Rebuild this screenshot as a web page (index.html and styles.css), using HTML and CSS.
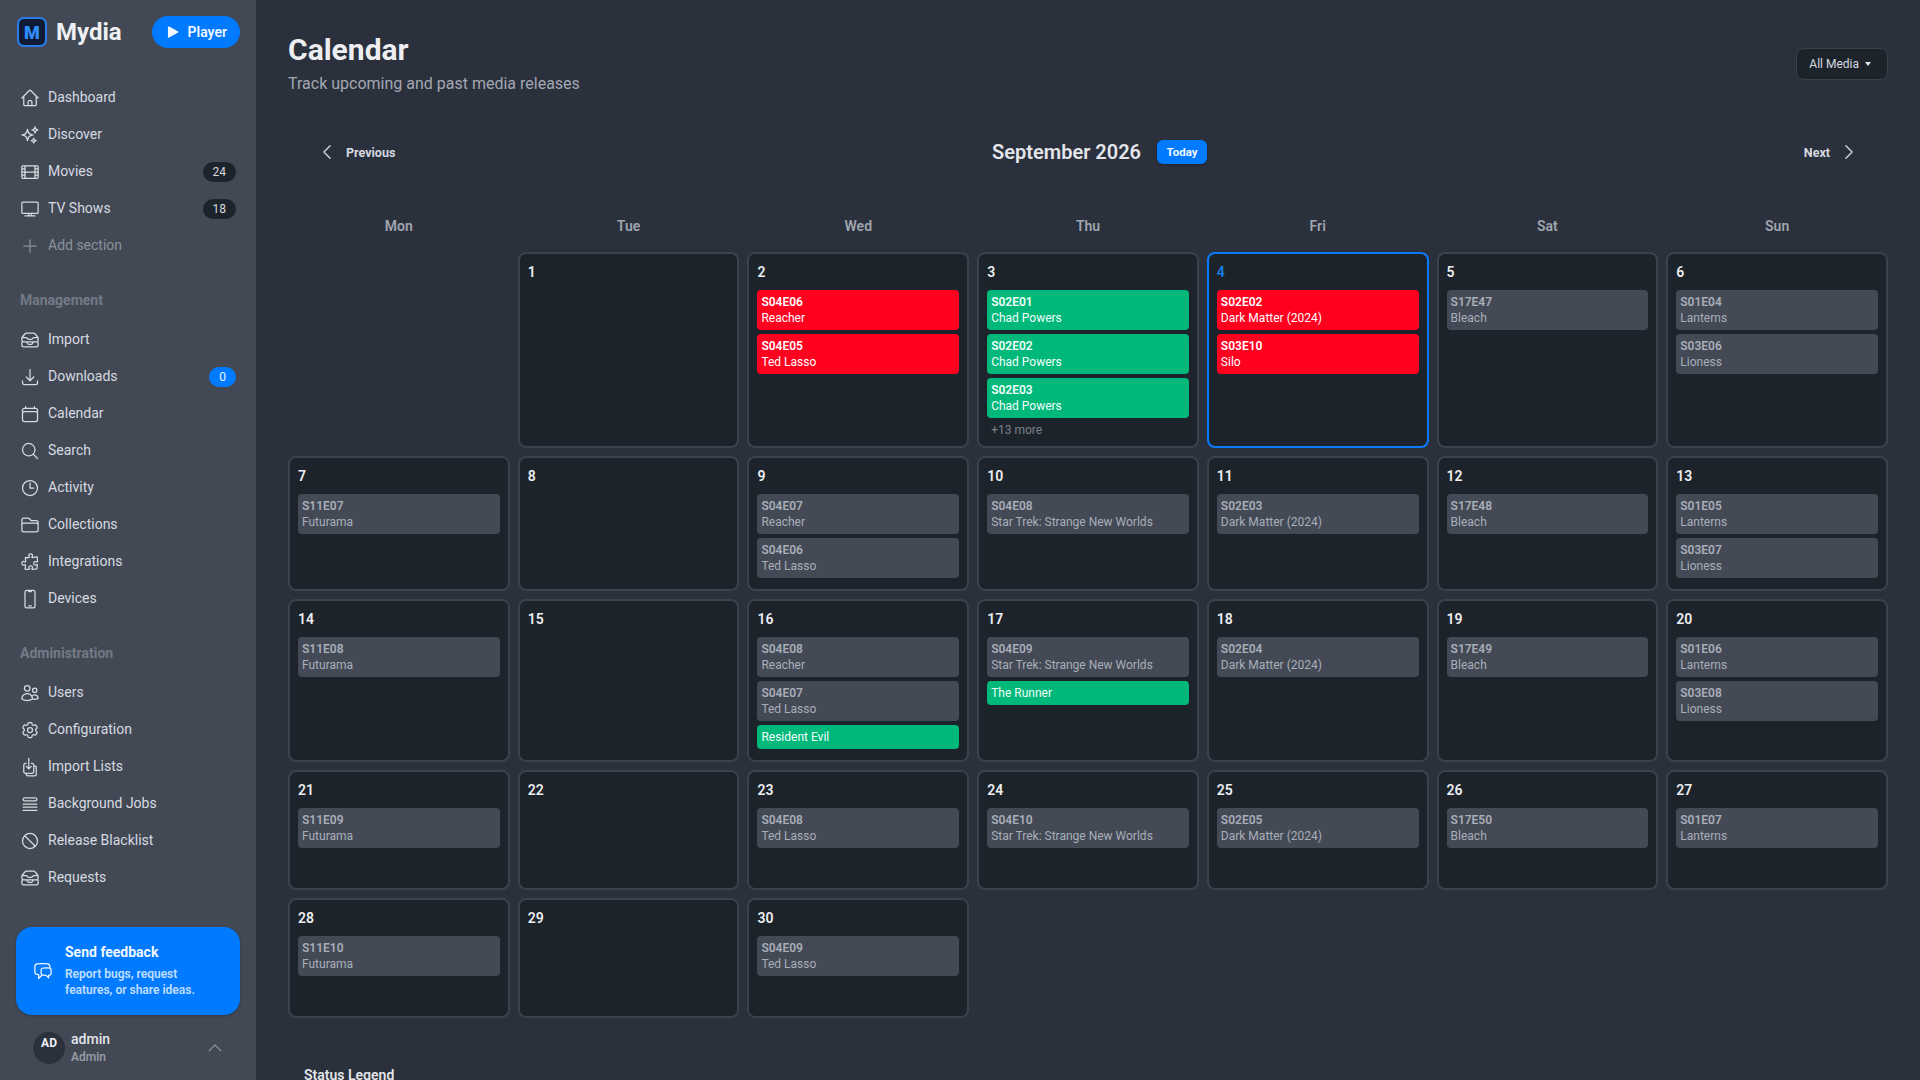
FILE: index.html
```html
<!DOCTYPE html>
<html lang="en">
<head>
  <meta charset="UTF-8">
  <meta name="viewport" content="width=device-width, initial-scale=1.0">
  <title>Calendar - Mydia</title>
  <link rel="stylesheet" href="styles.css">
</head>
<body>
  <!-- icon sprite -->
  <svg class="sprite" xmlns="http://www.w3.org/2000/svg">
    <symbol id="i-home" viewBox="0 0 24 24"><path d="m2.25 12 8.954-8.955c.44-.439 1.152-.439 1.591 0L21.75 12M4.5 9.75v10.125c0 .621.504 1.125 1.125 1.125H9.75v-4.875c0-.621.504-1.125 1.125-1.125h2.25c.621 0 1.125.504 1.125 1.125V21h4.125c.621 0 1.125-.504 1.125-1.125V9.75M8.25 21h8.25"/></symbol>
    <symbol id="i-sparkles" viewBox="0 0 24 24"><path d="M9.813 15.904 9 18.75l-.813-2.846a4.5 4.5 0 0 0-3.09-3.09L2.25 12l2.846-.813a4.5 4.5 0 0 0 3.09-3.09L9 5.25l.813 2.846a4.5 4.5 0 0 0 3.09 3.09L15.75 12l-2.846.813a4.5 4.5 0 0 0-3.09 3.09ZM18.259 8.715 18 9.75l-.259-1.035a3.375 3.375 0 0 0-2.455-2.456L14.25 6l1.036-.259a3.375 3.375 0 0 0 2.455-2.456L18 2.25l.259 1.035a3.375 3.375 0 0 0 2.456 2.456L21.75 6l-1.035.259a3.375 3.375 0 0 0-2.456 2.456ZM16.894 20.567 16.5 21.75l-.394-1.183a2.25 2.25 0 0 0-1.423-1.423L13.5 18.75l1.183-.394a2.25 2.25 0 0 0 1.423-1.423l.394-1.183.394 1.183a2.25 2.25 0 0 0 1.423 1.423l1.183.394-1.183.394a2.25 2.25 0 0 0-1.423 1.423Z"/></symbol>
    <symbol id="i-film" viewBox="0 0 24 24"><path d="M3.375 19.5h17.25m-17.25 0a1.125 1.125 0 0 1-1.125-1.125M3.375 19.5h1.5C5.496 19.5 6 18.996 6 18.375m-3.75 0V5.625m0 12.75v-1.5c0-.621.504-1.125 1.125-1.125m18.375 2.625V5.625m0 12.75c0 .621-.504 1.125-1.125 1.125m1.125-1.125v-1.5c0-.621-.504-1.125-1.125-1.125m0 3.75h-1.5A1.125 1.125 0 0 1 18 18.375M20.625 4.5H3.375m17.25 0c.621 0 1.125.504 1.125 1.125M20.625 4.5h-1.5C18.504 4.5 18 5.004 18 5.625m3.75 0v1.5c0 .621-.504 1.125-1.125 1.125M3.375 4.5c-.621 0-1.125.504-1.125 1.125M3.375 4.5h1.5C5.496 4.5 6 5.004 6 5.625m-3.75 0v1.5c0 .621.504 1.125 1.125 1.125m0 0h1.5m-1.5 0c-.621 0-1.125.504-1.125 1.125v1.5c0 .621.504 1.125 1.125 1.125m1.5-3.75C5.496 8.25 6 7.746 6 7.125v-1.5M4.875 8.25C5.496 8.25 6 8.754 6 9.375v1.5m0-5.25v5.25m0-5.25C6 5.004 6.504 4.5 7.125 4.5h9.75c.621 0 1.125.504 1.125 1.125m1.125 2.625h1.5m-1.5 0A1.125 1.125 0 0 1 18 7.125v-1.5m1.125 2.625c-.621 0-1.125.504-1.125 1.125v1.5m2.625-2.625c.621 0 1.125.504 1.125 1.125v1.5c0 .621-.504 1.125-1.125 1.125M18 5.625v5.25M7.125 12h9.75m-9.75 0A1.125 1.125 0 0 1 6 10.875M7.125 12C6.504 12 6 12.504 6 13.125m0-2.25C6 11.496 5.496 12 4.875 12M18 10.875c0 .621-.504 1.125-1.125 1.125M18 10.875c0 .621.504 1.125 1.125 1.125m-2.25 0c.621 0 1.125.504 1.125 1.125m-12 5.25v-5.25m0 5.25c0 .621.504 1.125 1.125 1.125h9.75c.621 0 1.125-.504 1.125-1.125m-12 0v-1.5c0-.621-.504-1.125-1.125-1.125M18 18.375v-5.25m0 5.25v-1.5c0-.621.504-1.125 1.125-1.125M18 13.125v1.5c0 .621.504 1.125 1.125 1.125M18 13.125c0-.621.504-1.125 1.125-1.125M6 13.125v1.5c0 .621-.504 1.125-1.125 1.125M6 13.125C6 12.504 5.496 12 4.875 12m-1.5 0h1.5m-1.5 0c-.621 0-1.125.504-1.125 1.125v1.5c0 .621.504 1.125 1.125 1.125M19.125 12h1.5m0 0c.621 0 1.125.504 1.125 1.125v1.5c0 .621-.504 1.125-1.125 1.125m-17.25 0h1.5m14.25 0h1.5"/></symbol>
    <symbol id="i-tv" viewBox="0 0 24 24"><path d="M6 20.25h12m-7.5-3v3m3-3v3m-10.125-3h17.25c.621 0 1.125-.504 1.125-1.125V4.875c0-.621-.504-1.125-1.125-1.125H3.375c-.621 0-1.125.504-1.125 1.125v11.25c0 .621.504 1.125 1.125 1.125Z"/></symbol>
    <symbol id="i-plus" viewBox="0 0 24 24"><path d="M12 4.5v15m7.5-7.5h-15"/></symbol>
    <symbol id="i-inbox" viewBox="0 0 24 24"><path d="m7.875 14.25 1.214 1.942a2.25 2.25 0 0 0 1.908 1.058h2.006c.776 0 1.497-.4 1.908-1.058l1.214-1.942M2.41 9h4.636a2.25 2.25 0 0 1 1.872 1.002l.164.246a2.25 2.25 0 0 0 1.872 1.002h2.092a2.25 2.25 0 0 0 1.872-1.002l.164-.246A2.25 2.25 0 0 1 16.954 9h4.636M2.41 9a2.25 2.25 0 0 0-.16.832V12a2.25 2.25 0 0 0 2.25 2.25h15A2.25 2.25 0 0 0 21.75 12V9.832c0-.287-.055-.57-.16-.832M2.41 9a2.25 2.25 0 0 1 .382-.632l3.285-3.832a2.25 2.25 0 0 1 1.708-.786h8.43c.657 0 1.281.287 1.709.786l3.284 3.832c.163.19.291.404.382.632M4.5 20.25h15A2.25 2.25 0 0 0 21.75 18v-2.625c0-.621-.504-1.125-1.125-1.125H3.375c-.621 0-1.125.504-1.125 1.125V18a2.25 2.25 0 0 0 2.25 2.25Z"/></symbol>
    <symbol id="i-download" viewBox="0 0 24 24"><path d="M3 16.5v2.25A2.25 2.25 0 0 0 5.25 21h13.5A2.25 2.25 0 0 0 21 18.75V16.5M16.5 12 12 16.5m0 0L7.5 12m4.5 4.5V3"/></symbol>
    <symbol id="i-calendar" viewBox="0 0 24 24"><path d="M6.75 3v2.25M17.25 3v2.25M3 18.75V7.5a2.25 2.25 0 0 1 2.25-2.25h13.5A2.25 2.25 0 0 1 21 7.5v11.25m-18 0A2.25 2.25 0 0 0 5.25 21h13.5A2.25 2.25 0 0 0 21 18.75m-18 0v-7.5A2.25 2.25 0 0 1 5.25 9h13.5A2.25 2.25 0 0 1 21 11.25v7.5"/></symbol>
    <symbol id="i-search" viewBox="0 0 24 24"><path d="m21 21-5.197-5.197m0 0A7.5 7.5 0 1 0 5.196 5.196a7.5 7.5 0 0 0 10.607 10.607Z"/></symbol>
    <symbol id="i-clock" viewBox="0 0 24 24"><path d="M12 6v6h4.5m4.5 0a9 9 0 1 1-18 0 9 9 0 0 1 18 0Z"/></symbol>
    <symbol id="i-folder" viewBox="0 0 24 24"><path d="M2.25 12.75V12A2.25 2.25 0 0 1 4.5 9.75h15A2.25 2.25 0 0 1 21.75 12v.75m-8.69-6.44-2.12-2.12a1.5 1.5 0 0 0-1.061-.44H4.5A2.25 2.25 0 0 0 2.25 6v12a2.25 2.25 0 0 0 2.25 2.25h15A2.25 2.25 0 0 0 21.75 18V9a2.25 2.25 0 0 0-2.25-2.25h-5.379a1.5 1.5 0 0 1-1.06-.44Z"/></symbol>
    <symbol id="i-puzzle" viewBox="0 0 24 24"><path d="M14.25 6.087c0-.355.186-.676.401-.959.221-.29.349-.634.349-1.003 0-1.036-1.007-1.875-2.25-1.875s-2.25.84-2.25 1.875c0 .369.128.713.349 1.003.215.283.401.604.401.959v0a.64.64 0 0 1-.657.643 48.39 48.39 0 0 1-4.163-.3c.186 1.613.293 3.25.315 4.907a.656.656 0 0 1-.658.663v0c-.355 0-.676-.186-.959-.401a1.647 1.647 0 0 0-1.003-.349c-1.036 0-1.875 1.007-1.875 2.25s.84 2.25 1.875 2.25c.369 0 .713-.128 1.003-.349.283-.215.604-.401.959-.401v0c.31 0 .555.26.532.57a48.039 48.039 0 0 1-.642 5.056c1.518.19 3.058.309 4.616.354a.64.64 0 0 0 .657-.643v0c0-.355-.186-.676-.401-.959a1.647 1.647 0 0 1-.349-1.003c0-1.035 1.008-1.875 2.25-1.875 1.243 0 2.25.84 2.25 1.875 0 .369-.128.713-.349 1.003-.215.283-.4.604-.4.959v0c0 .333.277.599.61.58a48.1 48.1 0 0 0 5.427-.63 48.05 48.05 0 0 0 .582-4.717.532.532 0 0 0-.533-.57v0c-.355 0-.676.186-.959.401-.29.221-.634.349-1.003.349-1.035 0-1.875-1.007-1.875-2.25s.84-2.25 1.875-2.25c.37 0 .713.128 1.003.349.283.215.604.401.96.401v0a.656.656 0 0 0 .658-.663 48.422 48.422 0 0 0-.37-5.36c-1.886.342-3.81.574-5.766.689a.578.578 0 0 1-.61-.58v0Z"/></symbol>
    <symbol id="i-phone" viewBox="0 0 24 24"><path d="M10.5 1.5H8.25A2.25 2.25 0 0 0 6 3.75v16.5a2.25 2.25 0 0 0 2.25 2.25h7.5A2.25 2.25 0 0 0 18 20.25V3.75a2.25 2.25 0 0 0-2.25-2.25H13.5m-3 0V3h3V1.5m-3 0h3m-3 18.75h3"/></symbol>
    <symbol id="i-users" viewBox="0 0 24 24"><path d="M15 19.128a9.38 9.38 0 0 0 2.625.372 9.337 9.337 0 0 0 4.121-.952 4.125 4.125 0 0 0-7.533-2.493M15 19.128v-.003c0-1.113-.285-2.16-.786-3.07M15 19.128v.106A12.318 12.318 0 0 1 8.624 21c-2.331 0-4.512-.645-6.374-1.766l-.001-.109a6.375 6.375 0 0 1 11.964-3.07M12 6.375a3.375 3.375 0 1 1-6.75 0 3.375 3.375 0 0 1 6.75 0Zm8.25 2.25a2.625 2.625 0 1 1-5.25 0 2.625 2.625 0 0 1 5.25 0Z"/></symbol>
    <symbol id="i-cog" viewBox="0 0 24 24"><path d="M9.594 3.94c.09-.542.56-.94 1.11-.94h2.593c.55 0 1.02.398 1.11.94l.213 1.281c.063.374.313.686.645.87.074.04.147.083.22.127.325.196.72.257 1.075.124l1.217-.456a1.125 1.125 0 0 1 1.37.49l1.296 2.247a1.125 1.125 0 0 1-.26 1.431l-1.003.827c-.293.241-.438.613-.43.992a7.723 7.723 0 0 1 0 .255c-.008.378.137.75.43.991l1.004.827c.424.35.534.955.26 1.43l-1.298 2.247a1.125 1.125 0 0 1-1.369.491l-1.217-.456c-.355-.133-.75-.072-1.076.124a6.47 6.47 0 0 1-.22.128c-.331.183-.581.495-.644.869l-.213 1.281c-.09.543-.56.94-1.11.94h-2.594c-.55 0-1.019-.398-1.11-.94l-.213-1.281c-.062-.374-.312-.686-.644-.87a6.52 6.52 0 0 1-.22-.127c-.325-.196-.72-.257-1.076-.124l-1.217.456a1.125 1.125 0 0 1-1.369-.49l-1.297-2.247a1.125 1.125 0 0 1 .26-1.431l1.004-.827c.292-.24.437-.613.43-.991a6.932 6.932 0 0 1 0-.255c.007-.38-.138-.751-.43-.992l-1.004-.827a1.125 1.125 0 0 1-.26-1.43l1.297-2.247a1.125 1.125 0 0 1 1.37-.491l1.216.456c.356.133.751.072 1.076-.124.072-.044.146-.086.22-.128.332-.183.582-.495.644-.869l.214-1.28Z"/><path d="M15 12a3 3 0 1 1-6 0 3 3 0 0 1 6 0Z"/></symbol>
    <symbol id="i-import-list" viewBox="0 0 24 24"><path d="M7.5 7.5h-.75A2.25 2.25 0 0 0 4.5 9.75v7.5a2.25 2.25 0 0 0 2.25 2.25h7.5a2.25 2.25 0 0 0 2.25-2.25v-7.5a2.25 2.25 0 0 0-2.25-2.25h-.75m-6 3.75 3 3m0 0 3-3m-3 3V1.5m6 9h.75a2.25 2.25 0 0 1 2.25 2.25v7.5a2.25 2.25 0 0 1-2.25 2.25h-7.5a2.25 2.25 0 0 1-2.25-2.25v-.75"/></symbol>
    <symbol id="i-queue" viewBox="0 0 24 24"><path d="M3.75 12h16.5m-16.5 3.75h16.5m-16.5 3.75h16.5M5.625 4.5h12.75a1.875 1.875 0 0 1 0 3.75H5.625a1.875 1.875 0 0 1 0-3.75Z"/></symbol>
    <symbol id="i-block" viewBox="0 0 24 24"><path d="M18.364 18.364A9 9 0 0 0 5.636 5.636m12.728 12.728A9 9 0 0 1 5.636 5.636m12.728 12.728L5.636 5.636"/></symbol>
    <symbol id="i-chat" viewBox="0 0 24 24"><path d="M20.25 8.511c.884.284 1.5 1.128 1.5 2.097v4.286c0 1.136-.847 2.1-1.98 2.193-.34.027-.68.052-1.02.072v3.091l-3-3c-1.354 0-2.694-.055-4.02-.163a2.115 2.115 0 0 1-.825-.242m9.345-8.334a2.126 2.126 0 0 0-.476-.095 48.64 48.64 0 0 0-8.048 0c-1.131.094-1.976 1.057-1.976 2.192v4.286c0 .837.46 1.58 1.155 1.951m9.345-8.334V6.637c0-1.621-1.152-3.026-2.76-3.235A48.455 48.455 0 0 0 11.25 3c-2.115 0-4.198.137-6.24.402-1.608.209-2.76 1.614-2.76 3.235v6.226c0 1.621 1.152 3.026 2.76 3.235.577.075 1.157.14 1.74.194V21l4.155-4.155"/></symbol>
    <symbol id="i-up" viewBox="0 0 24 24"><path d="m4.5 15.75 7.5-7.5 7.5 7.5"/></symbol>
    <symbol id="i-left" viewBox="0 0 24 24"><path d="M15.75 19.5 8.25 12l7.5-7.5"/></symbol>
    <symbol id="i-right" viewBox="0 0 24 24"><path d="m8.25 4.5 7.5 7.5-7.5 7.5"/></symbol>
  </svg>

  <aside class="sidebar">
    <div class="brand">
      <div class="brand-logo"><span class="logo-mark">M</span><span class="logo-name">Mydia</span></div>
      <button class="player-btn">
        <svg class="play-icon" viewBox="0 0 24 24"><path d="M5.25 5.653c0-.856.917-1.398 1.667-.986l11.54 6.347a1.125 1.125 0 0 1 0 1.972l-11.54 6.347a1.125 1.125 0 0 1-1.667-.986V5.653Z"/></svg>
        Player
      </button>
    </div>

    <nav class="side-nav">
      <a class="nav-item"><svg class="icon"><use href="#i-home"/></svg>Dashboard</a>
      <a class="nav-item"><svg class="icon"><use href="#i-sparkles"/></svg>Discover</a>
      <a class="nav-item"><svg class="icon"><use href="#i-film"/></svg>Movies<span class="count">24</span></a>
      <a class="nav-item"><svg class="icon"><use href="#i-tv"/></svg>TV Shows<span class="count">18</span></a>
      <a class="nav-item muted"><svg class="icon"><use href="#i-plus"/></svg>Add section</a>

      <div class="nav-title">Management</div>
      <a class="nav-item"><svg class="icon"><use href="#i-inbox"/></svg>Import</a>
      <a class="nav-item"><svg class="icon"><use href="#i-download"/></svg>Downloads<span class="count blue">0</span></a>
      <a class="nav-item"><svg class="icon"><use href="#i-calendar"/></svg>Calendar</a>
      <a class="nav-item"><svg class="icon"><use href="#i-search"/></svg>Search</a>
      <a class="nav-item"><svg class="icon"><use href="#i-clock"/></svg>Activity</a>
      <a class="nav-item"><svg class="icon"><use href="#i-folder"/></svg>Collections</a>
      <a class="nav-item"><svg class="icon"><use href="#i-puzzle"/></svg>Integrations</a>
      <a class="nav-item"><svg class="icon"><use href="#i-phone"/></svg>Devices</a>

      <div class="nav-title">Administration</div>
      <a class="nav-item"><svg class="icon"><use href="#i-users"/></svg>Users</a>
      <a class="nav-item"><svg class="icon"><use href="#i-cog"/></svg>Configuration</a>
      <a class="nav-item"><svg class="icon"><use href="#i-import-list"/></svg>Import Lists</a>
      <a class="nav-item"><svg class="icon"><use href="#i-queue"/></svg>Background Jobs</a>
      <a class="nav-item"><svg class="icon"><use href="#i-block"/></svg>Release Blacklist</a>
      <a class="nav-item"><svg class="icon"><use href="#i-inbox"/></svg>Requests</a>
    </nav>

    <div class="feedback">
      <svg class="icon"><use href="#i-chat"/></svg>
      <div>
        <div class="feedback-title">Send feedback</div>
        <div class="feedback-text">Report bugs, request features, or share ideas.</div>
      </div>
    </div>

    <div class="user-row">
      <div class="avatar">AD</div>
      <div class="user-info">
        <div class="user-name">admin</div>
        <div class="user-role">Admin</div>
      </div>
      <svg class="user-chevron"><use href="#i-up"/></svg>
    </div>
  </aside>

  <main class="content">
    <header class="page-header">
      <div>
        <h1>Calendar</h1>
        <p>Track upcoming and past media releases</p>
      </div>
      <button class="filter-btn">All Media<span class="caret"></span></button>
    </header>

    <div class="month-nav">
      <button class="nav-btn"><svg class="icon"><use href="#i-left"/></svg>Previous</button>
      <div class="month-center">
        <h2>September 2026</h2>
        <button class="today-btn">Today</button>
      </div>
      <button class="nav-btn">Next<svg class="icon"><use href="#i-right"/></svg></button>
    </div>

    <div class="weekdays">
      <div>Mon</div><div>Tue</div><div>Wed</div><div>Thu</div><div>Fri</div><div>Sat</div><div>Sun</div>
    </div>

    <div class="month-grid">
      <div></div>
      <div class="day"><div class="day-num">1</div></div>
      <div class="day"><div class="day-num">2</div>
        <div class="events">
          <div class="event red"><b>S04E06</b>Reacher</div>
          <div class="event red"><b>S04E05</b>Ted Lasso</div>
        </div>
      </div>
      <div class="day"><div class="day-num">3</div>
        <div class="events">
          <div class="event green"><b>S02E01</b>Chad Powers</div>
          <div class="event green"><b>S02E02</b>Chad Powers</div>
          <div class="event green"><b>S02E03</b>Chad Powers</div>
        </div>
        <div class="more">+13 more</div>
      </div>
      <div class="day today"><div class="day-num">4</div>
        <div class="events">
          <div class="event red"><b>S02E02</b>Dark Matter (2024)</div>
          <div class="event red"><b>S03E10</b>Silo</div>
        </div>
      </div>
      <div class="day"><div class="day-num">5</div>
        <div class="events"><div class="event"><b>S17E47</b>Bleach</div></div>
      </div>
      <div class="day"><div class="day-num">6</div>
        <div class="events">
          <div class="event"><b>S01E04</b>Lanterns</div>
          <div class="event"><b>S03E06</b>Lioness</div>
        </div>
      </div>

      <div class="day"><div class="day-num">7</div>
        <div class="events"><div class="event"><b>S11E07</b>Futurama</div></div>
      </div>
      <div class="day"><div class="day-num">8</div></div>
      <div class="day"><div class="day-num">9</div>
        <div class="events">
          <div class="event"><b>S04E07</b>Reacher</div>
          <div class="event"><b>S04E06</b>Ted Lasso</div>
        </div>
      </div>
      <div class="day"><div class="day-num">10</div>
        <div class="events"><div class="event"><b>S04E08</b>Star Trek: Strange New Worlds</div></div>
      </div>
      <div class="day"><div class="day-num">11</div>
        <div class="events"><div class="event"><b>S02E03</b>Dark Matter (2024)</div></div>
      </div>
      <div class="day"><div class="day-num">12</div>
        <div class="events"><div class="event"><b>S17E48</b>Bleach</div></div>
      </div>
      <div class="day"><div class="day-num">13</div>
        <div class="events">
          <div class="event"><b>S01E05</b>Lanterns</div>
          <div class="event"><b>S03E07</b>Lioness</div>
        </div>
      </div>

      <div class="day"><div class="day-num">14</div>
        <div class="events"><div class="event"><b>S11E08</b>Futurama</div></div>
      </div>
      <div class="day"><div class="day-num">15</div></div>
      <div class="day"><div class="day-num">16</div>
        <div class="events">
          <div class="event"><b>S04E08</b>Reacher</div>
          <div class="event"><b>S04E07</b>Ted Lasso</div>
          <div class="event green">Resident Evil</div>
        </div>
      </div>
      <div class="day"><div class="day-num">17</div>
        <div class="events">
          <div class="event"><b>S04E09</b>Star Trek: Strange New Worlds</div>
          <div class="event green">The Runner</div>
        </div>
      </div>
      <div class="day"><div class="day-num">18</div>
        <div class="events"><div class="event"><b>S02E04</b>Dark Matter (2024)</div></div>
      </div>
      <div class="day"><div class="day-num">19</div>
        <div class="events"><div class="event"><b>S17E49</b>Bleach</div></div>
      </div>
      <div class="day"><div class="day-num">20</div>
        <div class="events">
          <div class="event"><b>S01E06</b>Lanterns</div>
          <div class="event"><b>S03E08</b>Lioness</div>
        </div>
      </div>

      <div class="day"><div class="day-num">21</div>
        <div class="events"><div class="event"><b>S11E09</b>Futurama</div></div>
      </div>
      <div class="day"><div class="day-num">22</div></div>
      <div class="day"><div class="day-num">23</div>
        <div class="events"><div class="event"><b>S04E08</b>Ted Lasso</div></div>
      </div>
      <div class="day"><div class="day-num">24</div>
        <div class="events"><div class="event"><b>S04E10</b>Star Trek: Strange New Worlds</div></div>
      </div>
      <div class="day"><div class="day-num">25</div>
        <div class="events"><div class="event"><b>S02E05</b>Dark Matter (2024)</div></div>
      </div>
      <div class="day"><div class="day-num">26</div>
        <div class="events"><div class="event"><b>S17E50</b>Bleach</div></div>
      </div>
      <div class="day"><div class="day-num">27</div>
        <div class="events"><div class="event"><b>S01E07</b>Lanterns</div></div>
      </div>

      <div class="day"><div class="day-num">28</div>
        <div class="events"><div class="event"><b>S11E10</b>Futurama</div></div>
      </div>
      <div class="day"><div class="day-num">29</div></div>
      <div class="day"><div class="day-num">30</div>
        <div class="events"><div class="event"><b>S04E09</b>Ted Lasso</div></div>
      </div>
    </div>

    <div class="legend">
      <h3>Status Legend</h3>
    </div>
  </main>
</body>
</html>
```

FILE: styles.css
```css
* {
  box-sizing: border-box;
}
html, body {
  height: 100%;
}
body {
  display: flex;
  margin: 0;
  height: 100vh;
  overflow: hidden;
  background-color: #2a303c;
  color: #d7dae0;
  font-family: Roboto, "Liberation Sans", Arial, sans-serif;
  font-size: 14px;
}
button {
  border: none;
  background: none;
  font-family: inherit;
  cursor: pointer;
}
.sprite {
  display: none;
}
.icon {
  flex: none;
  width: 20px;
  height: 20px;
  fill: none;
  stroke: currentColor;
  stroke-width: 1.5;
  stroke-linecap: round;
  stroke-linejoin: round;
}
symbol {
  overflow: visible;
}

/* sidebar */
.sidebar {
  flex: none;
  width: 256px;
  background-color: #424955;
  display: flex;
  flex-direction: column;
}
.brand {
  display: flex;
  align-items: center;
  justify-content: space-between;
  height: 32px;
  margin: 16px 16px 31px 17px;
}
.brand-logo {
  display: flex;
  align-items: center;
  gap: 9px;
}
.logo-mark {
  display: flex;
  align-items: center;
  justify-content: center;
  width: 30px;
  height: 30px;
  border: 2px solid #2b7ce9;
  border-radius: 7px;
  background-color: #0f1b33;
  color: #2f8fff;
  font-size: 18px;
  font-weight: 900;
}
.logo-name {
  color: #eef0f3;
  font-size: 24px;
  font-weight: 700;
}
.player-btn {
  display: flex;
  align-items: center;
  gap: 6px;
  height: 32px;
  padding: 0 13px 0 12px;
  border-radius: 16px;
  background-color: #007aff;
  color: #f2f7ff;
  font-size: 14px;
  font-weight: 600;
}
.play-icon {
  width: 18px;
  height: 18px;
  fill: #f2f7ff;
}
.side-nav {
  display: flex;
  flex-direction: column;
}
.nav-item {
  display: flex;
  align-items: center;
  gap: 8px;
  height: 37px;
  padding: 0 20px;
  line-height: 21px;
  color: #d7dae0;
}
.nav-item.muted {
  color: #8b919c;
}
.count {
  margin-left: auto;
  height: 20px;
  padding: 0 10px;
  border-radius: 10px;
  background-color: #1d232a;
  color: #d7dae0;
  font-size: 12px;
  line-height: 20px;
  text-align: center;
}
.count.blue {
  background-color: #007aff;
  color: #f2f7ff;
}
.nav-title {
  height: 20px;
  margin: 26px 20px 11px;
  color: #737a86;
  font-weight: 700;
  line-height: 20px;
}
.feedback {
  display: flex;
  align-items: flex-start;
  gap: 12px;
  height: 88px;
  margin: 31px 16px 0;
  padding: 15px 16px 0 17px;
  border-radius: 16px;
  background-color: #007aff;
  color: #f2f7ff;
  box-shadow: 0 1px 3px rgba(0, 0, 0, 0.25);
}
.feedback .icon {
  margin-top: 19px;
}
.feedback-title {
  font-weight: 700;
  line-height: 20px;
}
.feedback-text {
  margin-top: 4px;
  font-size: 12px;
  font-weight: 600;
  line-height: 16px;
  opacity: 0.8;
}
.user-row {
  display: flex;
  align-items: center;
  gap: 6px;
  margin: 16px 0 0 33px;
  padding-right: 31px;
}
.avatar {
  display: flex;
  align-items: center;
  justify-content: center;
  width: 32px;
  height: 32px;
  padding-bottom: 10px;
  border-radius: 50%;
  background-color: #2a303c;
  color: #eef0f3;
  font-size: 12px;
  font-weight: 700;
}
.user-info {
  flex: 1;
}
.user-name {
  color: #e3e5ea;
  font-weight: 500;
  line-height: 16px;
}
.user-role {
  margin-top: 2px;
  color: #9aa0aa;
  font-size: 12px;
  font-weight: 500;
  line-height: 16px;
}
.user-chevron {
  width: 20px;
  height: 20px;
  fill: none;
  stroke: #9aa0aa;
  stroke-width: 1.25;
}

/* main area */
.content {
  flex: 1;
  min-width: 0;
  padding: 32px;
  overflow: hidden;
}
.page-header {
  display: flex;
  align-items: center;
  justify-content: space-between;
  height: 64px;
}
h1 {
  margin: 0 0 4px;
  color: #eceef1;
  font-size: 30px;
  font-weight: 700;
  line-height: 36px;
}
.page-header p {
  margin: 0;
  color: #a3a8b2;
  font-size: 16px;
  line-height: 24px;
}
.filter-btn {
  display: flex;
  align-items: center;
  gap: 6px;
  height: 32px;
  padding: 0 16px 0 12px;
  border: 1px solid #3a404c;
  border-radius: 8px;
  background-color: #1d232a;
  color: #d7dae0;
  font-size: 12px;
}
.caret {
  width: 0;
  height: 0;
  border-top: 4px solid #e3e5ea;
  border-left: 3.5px solid transparent;
  border-right: 3.5px solid transparent;
}
.month-nav {
  display: flex;
  align-items: center;
  justify-content: space-between;
  height: 32px;
  margin-top: 40px;
  padding: 0 16px;
}
.nav-btn {
  display: flex;
  align-items: center;
  gap: 9px;
  height: 32px;
  padding: 0 13px;
  color: #d7dae0;
  font-size: 12.5px;
  font-weight: 700;
}
.month-center {
  display: flex;
  align-items: center;
  gap: 16px;
}
h2 {
  margin: 0;
  color: #e3e5ea;
  font-size: 20px;
  font-weight: 600;
  line-height: 28px;
}
.today-btn {
  height: 24px;
  padding: 0 9.5px;
  border-radius: 6px;
  background-color: #007aff;
  color: #f2f7ff;
  font-size: 11.5px;
  font-weight: 700;
  box-shadow: 0 1px 2px rgba(0, 0, 0, 0.3);
}
.weekdays {
  display: grid;
  grid-template-columns: repeat(7, 1fr);
  gap: 8px;
  margin-top: 48px;
  color: #a0a5af;
  font-size: 14px;
  font-weight: 600;
  line-height: 20px;
  text-align: center;
}
.month-grid {
  display: grid;
  grid-template-columns: repeat(7, 1fr);
  gap: 8px;
  margin-top: 16px;
}
.day {
  min-width: 0;
  min-height: 120px;
  padding: 8px;
  border: 2px solid #3b414d;
  border-radius: 8px;
  background-color: #1d232a;
}
.day.today {
  border-color: #0a7bff;
}
.day-num {
  height: 20px;
  margin-bottom: 8px;
  color: #eceef1;
  font-weight: 600;
  line-height: 20px;
}
.today .day-num {
  color: #1a7fe8;
}
.events {
  display: flex;
  flex-direction: column;
  gap: 4px;
  padding-bottom: 3px;
}
.event {
  padding: 4px;
  border-radius: 4px;
  background-color: #434a56;
  color: #a9aeb8;
  font-size: 12px;
  line-height: 16px;
}
.event b {
  display: block;
  font-weight: 600;
}
.event.red {
  background-color: #ff001f;
  color: #fff;
}
.event.green {
  background-color: #00b87a;
  color: #f2fff9;
}
.more {
  height: 17px;
  padding: 1px 0 0 4px;
  color: #7b818c;
  font-size: 12px;
  line-height: 16px;
}
.legend {
  margin-top: 47px;
  padding: 0 16px;
}
h3 {
  margin: 0;
  color: #e3e5ea;
  font-size: 14px;
  font-weight: 600;
  line-height: 20px;
}
```
